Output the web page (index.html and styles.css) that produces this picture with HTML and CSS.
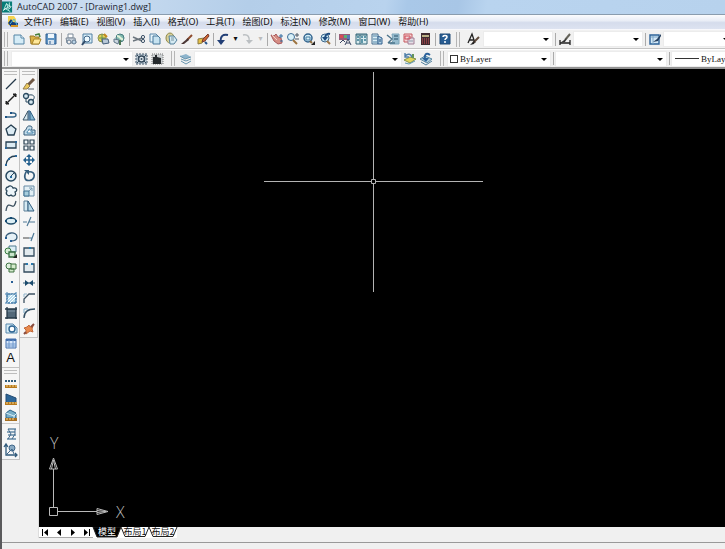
FILE: index.html
```html
<!DOCTYPE html>
<html lang="zh-CN">
<head>
<meta charset="utf-8">
<title>AutoCAD 2007 - [Drawing1.dwg]</title>
<link rel="stylesheet" href="styles.css">
</head>
<body>
<header class="title">
  <svg class="logo" viewBox="0 0 12 12"><path fill="#087d78" d="M0 0h11v12H0z"/><path d="M2 9l3-7 2 7M5 3l4 2-5 3 5 3M8 1v5" fill="none" stroke="#c5f0e8"/><path d="M1 10l4-3M8 8l2-3" stroke="#fff"/></svg>
  <h1>AutoCAD 2007 - [Drawing1.dwg]</h1>
</header>
<nav class="menu" aria-label="菜单">
  <svg class="doc" viewBox="0 0 12 12"><path fill="#f5d451" d="M1 0h6l2 3v6H1z"/><path fill="#173e77" d="M1 7l3-4 2 3 5 1v4H4z"/><path d="M3 8l4-5 3 6" stroke="#4db7dc" fill="none"/><path d="M4 10h7" stroke="#d69524" stroke-width="2"/></svg>
  <button>文件(F)</button><button>编辑(E)</button><button>视图(V)</button><button>插入(I)</button><button>格式(O)</button><button>工具(T)</button><button>绘图(D)</button><button>标注(N)</button><button>修改(M)</button><button>窗口(W)</button><button>帮助(H)</button>
</nav>
<div class="bar">
  <i class="grip"></i>
  <button class="ic" aria-label="新建"><svg viewBox="0 0 16 16"><path d="M3 4h7l3 3v6H3z" fill="#d5ecf7" stroke="#5585a5"/><path d="M10 4v3h3" fill="#fff" stroke="#5585a5"/></svg></button>
  <button class="ic" aria-label="打开"><svg viewBox="0 0 16 16"><path d="M3 5h4l1 1h4v7H4z" fill="#d9b145" stroke="#9c7a2b"/><path d="M5 13l2-5h7l-2 5z" fill="#ffe89a" stroke="#a98529"/><path d="M8 4l4-1 1 3" stroke="#467f3b" fill="none" stroke-width="1.5"/></svg></button>
  <button class="ic" aria-label="保存"><svg viewBox="0 0 16 16"><path d="M3 3h10v10H3z" fill="#5f94c3" stroke="#315f91"/><path d="M5 3h6v4H5z" fill="#eef7fd"/><path d="M5 9h6v4H5z" fill="#d8e4ef"/><path d="M7 10v3" stroke="#315f91"/></svg></button>
  <i class="sep"></i>
  <button class="ic" aria-label="打印"><svg viewBox="0 0 16 16"><path d="M5 3h5v4H5z" fill="#fff" stroke="#7b8a99"/><path d="M3 7h9l1 5H4z" fill="#c7d1db" stroke="#7c8a98"/><circle cx="6" cy="11" r="2" fill="#eee" stroke="#637b92"/><circle cx="11" cy="11" r="2" fill="#b9d3e5" stroke="#637b92"/></svg></button>
  <button class="ic" aria-label="打印预览"><svg viewBox="0 0 16 16"><path d="M4 3h9v9H4z" fill="#d7edf7" stroke="#5380a3"/><circle cx="8" cy="8" r="3" fill="#eefaff" stroke="#426789"/><path d="M6 10l-3 4" stroke="#324c6a" stroke-width="2"/></svg></button>
  <button class="ic" aria-label="发布"><svg viewBox="0 0 16 16"><circle cx="7" cy="7" r="4" fill="#e2d255" stroke="#8d9150"/><path d="M4 7h6M7 3v8" stroke="#649251"/><path d="M7 8h6l1 4-6 1z" fill="#b9c9d8" stroke="#435e79"/><path d="M9 3l3 3" stroke="#c38a20" stroke-width="2"/></svg></button>
  <button class="ic" aria-label="三维 DWF"><svg viewBox="0 0 16 16"><circle cx="9" cy="7" r="4" fill="#80b8ad" stroke="#477c7d"/><path d="M6 5c4 0 3 4 6 3" stroke="#e2f2d9" fill="none" stroke-width="2"/><path d="M3 8l5 1-1 4-4-2z" fill="#cdd8e0" stroke="#607789"/><path d="M9 9v5" stroke="#4c7655" stroke-width="2"/></svg></button>
  <i class="sep"></i>
  <button class="ic" aria-label="剪切"><svg viewBox="0 0 16 16"><path d="M2 6l9 4M2 10l9-3" stroke="#6b757d" stroke-width="1.4"/><circle cx="12" cy="6" r="1.6" fill="none" stroke="#3f5368"/><circle cx="12" cy="10" r="1.6" fill="none" stroke="#3f5368"/></svg></button>
  <button class="ic" aria-label="复制"><svg viewBox="0 0 16 16"><path d="M3 3h6l2 2v6H3z" fill="#e6f4fb" stroke="#5a87aa"/><path d="M6 5h5l2 2v6H6z" fill="#c6e2f0" stroke="#467799"/></svg></button>
  <button class="ic" aria-label="粘贴"><svg viewBox="0 0 16 16"><ellipse cx="7" cy="7" rx="4" ry="5" fill="#d8d099" stroke="#8f8848"/><path d="M6 5h5l3 4-3 4H7z" fill="#d5eaf2" stroke="#54819c"/><path d="M8 7h3M8 9h3" stroke="#7894a2"/></svg></button>
  <button class="ic" aria-label="特性匹配"><svg viewBox="0 0 16 16"><path d="M13 4L8 9" stroke="#8d4b2e" stroke-width="2"/><path d="M9 7l1 2-5 4H2z" fill="#4b3735"/></svg></button>
  <button class="ic" aria-label="块编辑器"><svg viewBox="0 0 16 16"><path d="M3 8l6-1-2 5-4 1z" fill="#e7c247" stroke="#8a7940"/><path d="M13 3L8 8l-1 3 3-1 4-5z" fill="#ca6533" stroke="#773b2e"/><path d="M10 11l2 2" stroke="#28558a" stroke-width="2"/></svg></button>
  <i class="sep"></i>
  <button class="ic" aria-label="放弃"><svg viewBox="0 0 16 16"><path d="M13 4C8 3 5 5 6 11" fill="none" stroke="#223f76" stroke-width="2"/><path d="M2 9h8l-4 5z" fill="#223f76"/></svg></button>
  <button class="dd" aria-label="放弃列表">▾</button>
  <button class="ic" aria-label="重做"><svg viewBox="0 0 16 16"><path d="M3 4c5-1 7 2 6 7" fill="none" stroke="#bbbfc2" stroke-width="1.5"/><path d="M6 9h7l-4 4z" fill="#bbbfc2"/></svg></button>
  <button class="dd off" aria-label="重做列表">▾</button>
  <i class="sep"></i>
  <button class="ic" aria-label="实时平移"><svg viewBox="0 0 16 16"><path d="M2 4l3 1 2-2 2 3 3 1 1 5-4 1-4-3z" fill="#d58d84" stroke="#a85a5c"/><path d="M10 5h4M12 3v4M11 10h3" stroke="#356fa2"/><path d="M3 4l5 5" stroke="#f1d0c6"/></svg></button>
  <button class="ic" aria-label="实时缩放"><svg viewBox="0 0 16 16"><circle cx="6" cy="6" r="3.5" fill="#d9f0f8" stroke="#3d6d96"/><path d="M8 9l4 4" stroke="#9d7440" stroke-width="2"/><path d="M10 4h4M12 2v4M10 8h4" stroke="#4d5967"/></svg></button>
  <button class="ic" aria-label="窗口缩放"><svg viewBox="0 0 16 16"><circle cx="7" cy="7" r="4" fill="#d9f0f8" stroke="#34658f" stroke-width="1.5"/><path d="M5 6h4v3H5z" fill="none" stroke="#437ca3"/><path d="M9 10l2 2" stroke="#8e6c3d" stroke-width="2"/><path d="M14 10v4h-4z" fill="#222"/></svg></button>
  <button class="ic" aria-label="缩放上一个"><svg viewBox="0 0 16 16"><circle cx="8" cy="7" r="4" fill="#cce8f3" stroke="#3b668b"/><path d="M13 3C9 2 8 5 8 8" fill="none" stroke="#1e4d80" stroke-width="2"/><path d="M5 6h6L8 10z" fill="#1e4d80"/><path d="M10 10l3 3" stroke="#9c7648" stroke-width="2"/></svg></button>
  <i class="sep"></i>
  <button class="ic" aria-label="特性"><svg viewBox="0 0 16 16"><path d="M2 3h11v6H2z" fill="#9a5c77"/><path d="M3 4h3v3H3z" fill="#d84e55"/><path d="M7 4h3v3H7z" fill="#5db275"/><path d="M10 4h3v5h-3z" fill="#5a79b8"/><path d="M3 12l3-3 2 2M8 14l3-6 3 6M9 12h4" stroke="#3a4663" fill="none"/></svg></button>
  <button class="ic" aria-label="设计中心"><svg viewBox="0 0 16 16"><path d="M3 3h11v10H3z" fill="#d9ecef" stroke="#356678"/><path d="M3 4h11M7 4v9" stroke="#356678"/><path d="M4 6h2M4 9h2M8 6h2M11 6h2M8 9h2M11 9h2M8 11h2" stroke="#367b93" stroke-width="1.5"/></svg></button>
  <button class="ic" aria-label="工具选项板"><svg viewBox="0 0 16 16"><path d="M3 3h6v10H3z" fill="#dceff7" stroke="#496e8e"/><path d="M4 5h4M4 8h4M4 11h4" stroke="#4f82a4"/><path d="M9 5l4 2v6H9z" fill="#b1d1e5" stroke="#315f8d"/><path d="M11 8v3" stroke="#214c77"/></svg></button>
  <button class="ic" aria-label="图纸集管理器"><svg viewBox="0 0 16 16"><path d="M7 3h7v10H5l3-3z" fill="#98bdcf" stroke="#7da6bb"/><path d="M2 4l5 4-4 4M3 12h7M9 5h4M9 8h4" stroke="#4c748a" fill="none" stroke-width="1.4"/></svg></button>
  <button class="ic" aria-label="标记集管理器"><svg viewBox="0 0 16 16"><path d="M3 3h8v8H3z" fill="#f5d6d7" stroke="#c5595f"/><path d="M7 7h6v6H7z" fill="#e6dee6" stroke="#a07f95"/><path d="M4 5h5v3H4z" fill="none" stroke="#d04d58"/><path d="M8 10h4" stroke="#8a9ba9"/></svg></button>
  <button class="ic" aria-label="快速计算器"><svg viewBox="0 0 16 16"><path d="M4 2h9v12H4z" fill="#402c30"/><path d="M5 4h7v2H5z" fill="#b9ae83"/><path d="M5 8h7M5 10h7M5 12h7" stroke="#d4535c" stroke-dasharray="1 1"/></svg></button>
  <i class="sep"></i>
  <button class="ic" aria-label="帮助"><svg viewBox="0 0 16 16"><path d="M3 3h10v10H3z" fill="#275c92" stroke="#214b77"/><path d="M6 6c0-2 4-2 4 0 0 2-2 1-2 3M8 10v2" stroke="#fff" fill="none" stroke-width="1.5"/></svg></button>
  <i class="grip"></i>
  <button class="ic wide" aria-label="文字样式"><svg viewBox="0 0 16 16"><path d="M3 12L7 3l3 9M4 9h5" stroke="#222" fill="none" stroke-width="1.3"/><path d="M14 6L8 12" stroke="#604b3d" stroke-width="2"/><path d="M10 9l-1 4-4 1z" fill="#222"/></svg></button>
  <span class="combo w70"><select aria-label="文字样式列表"><option></option></select></span>
  <i class="sep"></i>
  <button class="ic" aria-label="标注样式"><svg viewBox="0 0 16 16"><path d="M3 9v5M13 9v5M3 12h10" stroke="#222" stroke-width="1.3"/><path d="M13 3L8 9" stroke="#66655b" stroke-width="2"/><path d="M10 7l-2 4-5 1z" fill="#333"/></svg></button>
  <span class="combo w70"><select aria-label="标注样式列表"><option></option></select></span>
  <i class="sep"></i>
  <button class="ic" aria-label="表格样式"><svg viewBox="0 0 16 16"><path d="M3 4h9v9H3z" fill="#d2e7f6" stroke="#2d6399" stroke-width="1.4"/><path d="M4 6h8M6 5v8" stroke="#7ca6c7"/><path d="M14 3l-4 5-4 3 5-1 3-5z" fill="#243f5e"/></svg></button>
  <span class="combo w70"><select aria-label="表格样式列表"><option></option></select></span>
</div>
<div class="bar second">
  <i class="grip"></i>
  <span class="combo w120"><select aria-label="工作空间"><option></option></select></span>
  <button class="ic" aria-label="工作空间设置"><svg viewBox="0 0 16 16"><path d="M3 3h11v10H3z" fill="#b9c7d2" stroke="#44586b" stroke-dasharray="2 1"/><circle cx="8.500" cy="8" r="3" fill="#e0e8ee" stroke="#354a5c" stroke-width="1.5"/><circle cx="8.500" cy="8" r="1" fill="#354a5c"/><path d="M4 4l2 2M13 4l-2 2M4 12l2-2M13 12l-2-2" stroke="#354a5c"/></svg></button>
  <button class="ic" aria-label="我的工作空间"><svg viewBox="0 0 16 16"><path d="M3 3h11v10H3z" fill="#ccd0d2" stroke="#777" stroke-dasharray="1 1"/><path d="M4 8V6h2V4h2v2l4 1v6H4z" fill="#252a2d"/></svg></button>
  <i class="grip gap"></i>
  <button class="ic" aria-label="图层特性管理器"><svg viewBox="0 0 16 16"><path d="M2 5l6-2 5 3-6 2z" fill="#8db4cc"/><path d="M3 8l5 2 5-2M3 10l5 3 5-3M2 5l5 3 6-2" stroke="#6795ae" fill="none"/></svg></button>
  <span class="combo w206"><select aria-label="图层列表"><option></option></select></span>
  <button class="ic" aria-label="图层置为当前"><svg viewBox="0 0 16 16"><path d="M2 9l6-3 6 2-6 4z" fill="#e1d55d" stroke="#86934d"/><path d="M3 12l4 1 6-3" stroke="#6197af" fill="none"/><path d="M3 5c3-3 6-2 7 1M3 2v4h4" stroke="#4d7ea8" fill="none" stroke-width="1.4"/><path d="M11 3v4" stroke="#66945a" stroke-width="2"/></svg></button>
  <button class="ic" aria-label="上一个图层"><svg viewBox="0 0 16 16"><path d="M2 8l5-3 7 3-5 4z" fill="#b5d3e2" stroke="#5787a3"/><path d="M3 11l5 3 6-4" stroke="#507f9c" fill="none"/><path d="M12 4c-4-3-6 0-5 4" stroke="#2b629b" fill="none" stroke-width="2"/><path d="M4 7h7l-3 4z" fill="#2b629b"/></svg></button>
  <i class="grip gap"></i>
  <span class="combo w104 color"><i class="swatch"></i><select aria-label="颜色"><option>ByLayer</option></select></span>
  <i class="sep"></i>
  <span class="combo w110"><select aria-label="线宽"><option></option></select></span>
  <i class="sep"></i>
  <span class="combo w110 line"><i class="sample"></i><select aria-label="线型"><option>ByLayer</option></select></span>
</div>
<main class="work">
  <aside class="dock">
    <div class="col">
      <div class="panel">
        <i class="hgrip"></i>
        <div class="tools nineteen">
          <button aria-label="直线"><svg viewBox="0 0 16 16"><path d="M3 13L13 3" stroke="#25394b" stroke-width="1.3"/></svg></button>
          <button aria-label="构造线"><svg viewBox="0 0 16 16"><path d="M3 13L13 3" stroke="#222" stroke-width="1.4"/><path d="M3 13v-3l3 3zM13 3v3l-3-3z" fill="#222" stroke="#222"/></svg></button>
          <button aria-label="多段线"><svg viewBox="0 0 16 16"><path d="M3 10h7c4 0 4-4 0-4H8" stroke="#356386" fill="none" stroke-width="1.4"/><path d="M2 9h2v2H2zM7 5h2v2H7z" fill="#1b5182"/></svg></button>
          <button aria-label="正多边形"><svg viewBox="0 0 16 16"><path d="M8 3l5 4-2 6H5L3 7z" fill="#dcebf3" stroke="#263f51" stroke-width="1.3"/></svg></button>
          <button aria-label="矩形"><svg viewBox="0 0 16 16"><path d="M3 5h10v6H3z" fill="#dcebf3" stroke="#263f51" stroke-width="1.3"/><path d="M2 10h2v2H2zM12 4h2v2h-2z" fill="#2a679a"/></svg></button>
          <button aria-label="圆弧"><svg viewBox="0 0 16 16"><path d="M3 13C4 7 7 4 13 4" stroke="#263f51" fill="none" stroke-width="1.3"/><path d="M2 12h2v2H2zM5 6h2v2H5zM12 3h2v2h-2z" fill="#2a679a"/></svg></button>
          <button aria-label="圆"><svg viewBox="0 0 16 16"><circle cx="8" cy="8" r="5" fill="#dfedf4" stroke="#27475e" stroke-width="1.5"/><path d="M7 9l4-4" stroke="#27475e"/><path d="M7 8h2v2H7z" fill="#266ba0"/></svg></button>
          <button aria-label="修订云线"><svg viewBox="0 0 16 16"><path d="M5 4c2-2 4-1 5 1 4-1 5 3 2 4 2 4-2 5-4 3-3 2-6-1-4-4-2-1-1-4 1-4z" fill="#edf5fa" stroke="#294457" stroke-width="1.3"/></svg></button>
          <button aria-label="样条曲线"><svg viewBox="0 0 16 16"><path d="M3 13c1-8 4-6 6-5s3-1 4-5" stroke="#3f5261" fill="none" stroke-width="1.3"/></svg></button>
          <button aria-label="椭圆"><svg viewBox="0 0 16 16"><ellipse cx="8" cy="8" rx="5" ry="3" fill="#dceef5" stroke="#24506d" stroke-width="1.5"/><path d="M2 7h2v2H2zM12 7h2v2h-2zM7 4h2v2H7z" fill="#164c75"/></svg></button>
          <button aria-label="椭圆弧"><svg viewBox="0 0 16 16"><path d="M3 9c-1-6 11-7 11-1 0 4-4 4-6 4" stroke="#365b78" fill="#e5f0f6" stroke-width="1.3"/><path d="M2 8h2v2H2zM7 11h2v2H7z" fill="#255c91"/></svg></button>
          <button aria-label="插入块"><svg viewBox="0 0 16 16"><path d="M6 2h7v6H6z" fill="#dceef5" stroke="#517d91"/><circle cx="5" cy="7" r="3" fill="#d7edd5" stroke="#397b42"/><path d="M6 8h6v5H6z" fill="#c9e5cc" stroke="#356b40" stroke-width="1.3"/><path d="M14 10v4h-4z" fill="#222"/></svg></button>
          <button aria-label="创建块"><svg viewBox="0 0 16 16"><circle cx="6" cy="7" r="3" fill="#e1f0df" stroke="#3f7343"/><path d="M8 5h5v5H8zM6 10h5v3H6z" fill="#d3eacb" stroke="#3e7040"/></svg></button>
          <button aria-label="点"><svg viewBox="0 0 16 16"><path d="M8 7h2v2H8z" fill="#285f96"/></svg></button>
          <button aria-label="图案填充"><svg viewBox="0 0 16 16"><path d="M4 4h9v9H4z" fill="#b9dced" stroke="#3b6e9b"/><path d="M4 10l6-6M4 13l9-9M7 13l6-6" stroke="#fff"/><path d="M2 4h12M2 13h12M4 2v12M13 2v12" stroke="#437eae" stroke-dasharray="2 1"/></svg></button>
          <button aria-label="渐变色"><svg viewBox="0 0 16 16"><path d="M4 4h9v9H4z" fill="#526879"/><path d="M4 6h9" stroke="#8299aa"/><path d="M2 4h12M2 13h12M4 2v12M13 2v12" stroke="#263847" stroke-width="1.3"/></svg></button>
          <button aria-label="面域"><svg viewBox="0 0 16 16"><path d="M3 4h7l4 4v5H3z" fill="#d5ebf5" stroke="#5687ad"/><circle cx="9" cy="9" r="3" fill="#fff" stroke="#2e6593" stroke-width="1.4"/></svg></button>
          <button aria-label="表格"><svg viewBox="0 0 16 16"><path d="M3 4h10v9H3z" fill="#dbe9fb" stroke="#426eac"/><path d="M3 5h10" stroke="#426eac" stroke-width="2"/><path d="M3 9h10M3 11h10M6 5v8M10 5v8" stroke="#6e98cc"/></svg></button>
          <button class="letter" aria-label="多行文字">A</button>
        </div>
      </div>
      <div class="panel">
        <i class="hgrip"></i>
        <div class="tools three">
          <button aria-label="距离"><svg viewBox="0 0 16 16"><path d="M2 6h12" stroke="#315c7b" stroke-width="2" stroke-dasharray="2 1"/><path d="M2 10h12v3H2z" fill="#b7791d"/><path d="M4 10v2M7 10v2M10 10v2M13 10v2" stroke="#f4d792"/></svg></button>
          <button aria-label="面积"><svg viewBox="0 0 16 16"><path d="M3 3l10 4v5H3z" fill="#2e6799" stroke="#234b73"/><path d="M2 11h12v3H2z" fill="#b7791d"/><path d="M4 11v2M7 11v2M10 11v2M13 11v2" stroke="#f4d792"/></svg></button>
          <button aria-label="质量特性"><svg viewBox="0 0 16 16"><path d="M3 6l4-3 6 3v5H3z" fill="#78afc9" stroke="#2b6288"/><path d="M3 6l8 3v3M11 9l3-3" stroke="#d8eef7" fill="none"/><path d="M2 11h12v3H2z" fill="#a76e20"/><path d="M4 11v2M7 11v2M10 11v2" stroke="#f4d792"/></svg></button>
        </div>
        <div class="tools two">
          <button aria-label="列表"><svg viewBox="0 0 16 16"><path d="M5 3h8M4 6h8M5 9h8M4 13h9" stroke="#668aa6" stroke-width="1.5"/><path d="M5 3l3 5-3 5M12 3v5l-3 5" stroke="#42698c" fill="none"/></svg></button>
          <button aria-label="定位点"><svg viewBox="0 0 16 16"><path d="M3 3v10h11M1 5l2-3 2 3M12 11l2 2-2 2" stroke="#315a7b" fill="none" stroke-width="1.3"/><circle cx="9" cy="6" r="3" fill="#8aabc4" stroke="#416789"/><path d="M4 12l5-5 2 5" stroke="#416789" fill="none"/></svg></button>
        </div>
      </div>
    </div>
    <div class="col">
      <div class="panel">
        <i class="hgrip"></i>
        <div class="tools seventeen">
          <button aria-label="删除"><svg viewBox="0 0 16 16"><path d="M13 3L7 9" stroke="#705845" stroke-width="3"/><path d="M6 7l3 3-3 3H2z" fill="#eac85e" stroke="#937e51"/><path d="M7 13h6" stroke="#59636b"/></svg></button>
          <button aria-label="复制对象"><svg viewBox="0 0 16 16"><circle cx="5" cy="5" r="2.500" fill="#d6e7ef" stroke="#2c4b61" stroke-width="1.3"/><circle cx="10" cy="11" r="2.500" fill="#d6e7ef" stroke="#2c4b61" stroke-width="1.3"/><path d="M8 4c6-1 6 3 4 5M5 8v3h2" fill="none" stroke="#2c4b61"/></svg></button>
          <button aria-label="镜像"><svg viewBox="0 0 16 16"><path d="M7 4v9H2z" fill="#d6e7ef" stroke="#3c5466"/><path d="M9 4v9h5z" fill="#84b6d1" stroke="#305f82"/><path d="M8 3v11" stroke="#1e5989"/></svg></button>
          <button aria-label="偏移"><svg viewBox="0 0 16 16"><path d="M3 13V9c3 0 2-6 6-5 3 0 2 3 1 4h4v5z" fill="#c3dcea" stroke="#355a78"/><path d="M6 11c0-3 2-1 2-4 2 0 0 3 4 3v1z" fill="#fff" stroke="#4784ab"/></svg></button>
          <button aria-label="阵列"><svg viewBox="0 0 16 16"><path d="M3 3h4v4H3zM9 3h4v4H9zM3 9h4v4H3zM9 9h4v4H9z" fill="#f3f8fb" stroke="#293f50" stroke-width="1.2"/></svg></button>
          <button aria-label="移动"><svg viewBox="0 0 16 16"><path d="M4 8h8M8 4v8" stroke="#24608e" stroke-width="1.6"/><path d="M8 2l3 3H5zM8 14l3-3H5zM2 8l3-3v6zM14 8l-3-3v6z" fill="#24608e"/></svg></button>
          <button aria-label="旋转"><svg viewBox="0 0 16 16"><path d="M7 4c4-1 7 1 6 5s-8 5-9 1c-1-2 0-4 1-6" fill="none" stroke="#365e7d" stroke-width="1.6"/><path d="M3 2h5v5z" fill="#365e7d"/></svg></button>
          <button aria-label="缩放"><svg viewBox="0 0 16 16"><path d="M3 3h10v10H3z" fill="#e2eff5" stroke="#668aa4"/><path d="M3 8h5v5H3z" fill="#a7cddd" stroke="#3e6e90"/><path d="M8 8l3-3M8 5h3v3" stroke="#7b9ab0" fill="none"/></svg></button>
          <button aria-label="拉伸"><svg viewBox="0 0 16 16"><path d="M3 3h4v10H3z" fill="#d6eaf3" stroke="#5c7e96"/><path d="M7 3l6 10H7z" fill="#b9d8e7" stroke="#315d7e"/></svg></button>
          <button aria-label="修剪"><svg viewBox="0 0 16 16"><path d="M2 8h4M8 8h6M6 12l4-9" stroke="#4e7896" stroke-width="1.2"/></svg></button>
          <button aria-label="延伸"><svg viewBox="0 0 16 16"><path d="M2 9h6" stroke="#444"/><path d="M8 9h3M10 12l3-8" stroke="#4e7896" stroke-width="1.2"/></svg></button>
          <button aria-label="打断于点"><svg viewBox="0 0 16 16"><path d="M3 4h10v8H3z" fill="#e2eaee" stroke="#334b5d" stroke-width="1.3"/><path d="M9 3v2" stroke="#267eaf" stroke-width="2"/></svg></button>
          <button aria-label="打断"><svg viewBox="0 0 16 16"><path d="M6 4H3v8h10V4h-3" fill="#e2eaee" stroke="#334b5d" stroke-width="1.3"/><path d="M5 3h2v2H5zM10 3h2v2h-2z" fill="#2779ad"/></svg></button>
          <button aria-label="合并"><svg viewBox="0 0 16 16"><path d="M2 8h12" stroke="#375d77"/><path d="M4 5l4 3-4 3zM12 5L8 8l4 3z" fill="#1b4b6d"/></svg></button>
          <button aria-label="倒角"><svg viewBox="0 0 16 16"><path d="M3 13V9l5-5h6" fill="none" stroke="#3c5263" stroke-width="1.3"/><path d="M3 7V4h3" fill="none" stroke="#8fb4cb"/></svg></button>
          <button aria-label="圆角"><svg viewBox="0 0 16 16"><path d="M3 13c0-6 4-9 11-9" fill="none" stroke="#344f63" stroke-width="1.4"/><path d="M3 8V4h4" fill="none" stroke="#78abca"/></svg></button>
          <button aria-label="分解"><svg viewBox="0 0 16 16"><path d="M7 5l1-1 1 2 3-1-1 3 1 3-3-1-4 3v-4l-2-2 3-1z" fill="#e98a4e" stroke="#c0683a"/><path d="M10 6l3-3M3 13l2-2" stroke="#884c3e" stroke-width="2"/></svg></button>
        </div>
      </div>
    </div>
  </aside>
  <section class="view">
    <div class="canvas">
      <svg class="cursor" viewBox="0 0 220 220"><path d="M109.500 0v107M109.500 112v108M0 109.500h107M112 109.500h107" stroke="#b4b4b4"/><path d="M107.500 107.500h4v4h-4z" fill="none" stroke="#b4b4b4"/></svg>
      <svg class="ucs" viewBox="0 -8 90 92"><g fill="none" stroke="#bababa"><path d="M4.500 71.500h8v8h-8zM8.500 71V33M13 75.500h39M8.500 22l-4 11h8zM8.500 24l-2 9M8.500 24l2 9M63 75.500l-11-3v6zM61 75.500l-9-1M61 75.500l-9 1"/></g><text x="5" y="13">Y</text><text x="71" y="82">X</text></svg>
    </div>
    <nav class="tabs" aria-label="布局">
      <div class="pager">
        <button aria-label="第一个"><svg viewBox="0 0 9 9"><path d="M1 1h1v7H1zM7 1v7L3 4.500z"/></svg></button>
        <button aria-label="上一个"><svg viewBox="0 0 9 9"><path d="M6 1v7L2 4.500z"/></svg></button>
        <button aria-label="下一个"><svg viewBox="0 0 9 9"><path d="M3 1v7l4-3.500z"/></svg></button>
        <button aria-label="最后一个"><svg viewBox="0 0 9 9"><path d="M2 1v7l4-3.500zM7 1h1v7H7z"/></svg></button>
      </div>
      <button class="tab active"><svg viewBox="0 0 28 10"><path d="M0 0h28l-4 10H4z"/></svg><span>模型</span></button>
      <button class="tab"><svg viewBox="0 0 28 10"><path d="M0 0l4 9.500h20L28 0"/></svg><span>布局1</span></button>
      <button class="tab"><svg viewBox="0 0 28 10"><path d="M0 0l4 9.500h20L28 0"/></svg><span>布局2</span></button>
    </nav>
  </section>
</main>
<footer class="status"></footer>
</body>
</html>
```
FILE: styles.css
```css
* { box-sizing: border-box; }

body {
  margin: 0;
  height: 100vh;
  display: flex;
  flex-direction: column;
  overflow: hidden;
  border-left: 2px solid #5a5a5c;
  background: #f0f0f0;
  color: #111;
  font: 9px/12px "Noto Sans", "Noto Sans CJK SC", sans-serif;
}

button {
  margin: 0;
  padding: 0;
  border: 0;
  background: none;
  color: inherit;
  font: inherit;
}

svg { display: block; flex: none; }
i { display: block; flex: none; }

.title {
  flex: none;
  height: 15px;
  display: flex;
  align-items: center;
  gap: 4px;
  border-bottom: 1px solid #8a9cae;
  background: linear-gradient(100deg, #cfe0f1 0, #c3d8ee 20%, #b4cee9 34%, #b9d3ee 53%, #a9c8e8 56%, #a8c6e6 63%, #b9d4ef 67%, #b7d2ed 100%);
}

.title h1 {
  margin: 0;
  font: 400 9px/14px "Open Sans", "Noto Sans", sans-serif;
  color: #1d2630;
}

.logo { width: 11px; height: 12px; }

.menu {
  flex: none;
  height: 15px;
  padding-left: 5px;
  display: flex;
  align-items: center;
  gap: 8px;
  border-bottom: 1px solid #f8f8fc;
  background: linear-gradient(#fbfcfe, #e9edf6 40%, #d5dcec 55%, #dde3f1);
  white-space: nowrap;
}

.doc { width: 12px; height: 12px; margin-right: -3px; }

.bar {
  flex: none;
  height: 19px;
  padding-left: 2px;
  display: flex;
  align-items: center;
  overflow: hidden;
  border-bottom: 1px solid #c4c4c4;
  background: #f1f1f1;
}

.second {
  height: 20px;
  border-top: 1px solid #fff;
  border-bottom: 2px solid #929292;
}

.grip {
  width: 4px;
  height: 15px;
  margin-right: 3px;
  border: solid #b5b5b5;
  border-width: 0 1px;
}

.ic + .grip { margin-left: 3px; }
.ic + .gap { margin-left: 6px; }

.sep {
  width: 1px;
  height: 13px;
  margin: 0 1px 0 2px;
  background: #aaa;
}

.ic { flex: none; width: 16px; height: 16px; }
.ic svg { width: 16px; height: 16px; }
.wide { width: 20px; }
.wide svg { margin: auto; }

.dd {
  flex: none;
  width: 9px;
  font: 8px/12px "DejaVu Sans", sans-serif;
}

.off { color: #bbb; }

.combo {
  position: relative;
  flex: none;
  height: 16px;
  background: #fff;
}

.combo::after {
  content: "";
  position: absolute;
  right: 4px;
  top: 7px;
  border: solid transparent;
  border-width: 3px 3px 0;
  border-top-color: #000;
}

.combo select {
  width: 100%;
  height: 100%;
  padding: 0;
  border: 1px solid #ececec;
  border-radius: 0;
  appearance: none;
  background: transparent;
  color: #111;
  font: 9px/14px "Liberation Serif", serif;
}

.w70 { width: 70px; }
.w104 { width: 104px; }
.w110 { width: 112px; }
.w120 { width: 122px; }
.w206 { width: 208px; }

.color, .line { display: flex; align-items: center; }
.color select { padding-left: 12px; }
.line select { padding-left: 29px; }

.swatch {
  position: absolute;
  left: 3px;
  width: 8px;
  height: 8px;
  border: 1px solid #333;
}

.sample {
  position: absolute;
  left: 4px;
  width: 24px;
  height: 1px;
  background: #333;
}

.work {
  flex: 1;
  min-height: 0;
  display: flex;
}

.dock {
  flex: none;
  width: 37px;
  display: flex;
  border-right: 1px solid #ddd;
}

.col { width: 18px; }

.panel {
  padding: 2px 0 1px;
  border: solid #c2c2c2;
  border-width: 0 1px 1px 0;
  background: #f6f6f6;
}

.hgrip {
  height: 4px;
  margin: 0 2px 1px;
  border: solid #bdbdbd;
  border-width: 1px 0;
}

.tools { display: grid; grid-auto-rows: 1fr; }
.tools button { display: grid; place-items: center; min-height: 0; }
.tools svg { width: 16px; height: 16px; }
.nineteen { height: 290px; }
.seventeen { height: 260px; }
.three { height: 48px; }
.two { height: 35px; padding-top: 2px; border-top: 1px solid #ccc; }
.letter { font: 13px/14px "Liberation Sans", sans-serif; }

.view {
  flex: 1;
  min-width: 0;
  display: flex;
  flex-direction: column;
}

.canvas {
  position: relative;
  flex: 1;
  overflow: hidden;
  background: #000;
}

.cursor {
  position: absolute;
  left: 225px;
  top: 3px;
  width: 220px;
  height: 220px;
}

.ucs {
  position: absolute;
  left: 6px;
  bottom: 7px;
  width: 90px;
  height: 92px;
}

.ucs text {
  fill: #bababa;
  font: 300 16px "Open Sans", sans-serif;
}

.tabs {
  flex: none;
  height: 11px;
  display: flex;
}

.pager {
  width: 54px;
  display: flex;
  align-items: center;
  justify-content: space-around;
  background: #fff;
  border-bottom: 1px solid #aaa;
}

.pager svg { width: 9px; height: 9px; }

.tab {
  display: grid;
  width: 28px;
  background: #fff;
  font: 9px/10px "Noto Sans CJK SC", sans-serif;
}

.tab svg, .tab span { grid-area: 1 / 1; }
.tab svg { width: 28px; height: 10px; fill: none; stroke: #222; overflow: visible; }
.active { color: #fff; }
.active svg { fill: #000; }
.tab span { position: relative; }

.status {
  flex: none;
  height: 11px;
  border-top: 4px solid #f0f0f0;
  background: linear-gradient(#999 0 1px, #f0f0f0 1px);
  background-clip: padding-box;
}
```
